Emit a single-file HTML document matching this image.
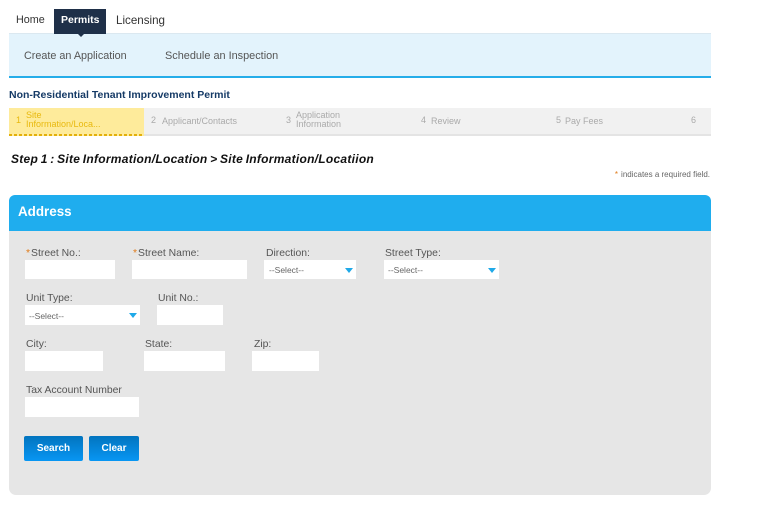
<!DOCTYPE html>
<html><head><meta charset="utf-8"><style>
html,body{margin:0;padding:0;background:#fff}
body{width:775px;height:525px;position:relative;overflow:hidden;font-family:"Liberation Sans",sans-serif}
.a{position:absolute;white-space:nowrap}
.l{font-size:10.4px;color:#555;line-height:12px}
.i{position:absolute;background:#fff}
.st{color:#e07b1a;margin-right:1px}
.g{color:#aaa;font-size:9px;line-height:10px}
.sel{font-size:8.5px;color:#666;line-height:10px}
.tri{position:absolute;width:0;height:0;border-left:4px solid transparent;border-right:4px solid transparent;border-top:5px solid #1fa9e8}
</style></head><body>
<div class="a" style="left:9px;top:33px;width:702px;height:42px;background:#e3f3fc;border-top:1px solid #dbe8f0"></div>
<div class="a" style="left:9px;top:76px;width:702px;height:2px;background:#25ade9"></div>
<div class="a" style="left:16px;top:14px;font-size:10.8px;line-height:13px;color:#333">Home</div>
<div class="a" style="left:54px;top:9px;width:52px;height:25px;background:#1f3049"></div>
<div class="a" style="left:77px;top:33px;width:0;height:0;border-left:4px solid transparent;border-right:4px solid transparent;border-top:4px solid #1f3049"></div>
<div class="a" style="left:61px;top:14px;font-size:10.5px;line-height:13px;color:#fff;font-weight:bold">Permits</div>
<div class="a" style="left:116px;top:14px;font-size:11.6px;line-height:13px;color:#333">Licensing</div>
<div class="a" style="left:24px;top:50px;font-size:10.8px;line-height:13px;color:#555">Create an Application</div>
<div class="a" style="left:165px;top:50px;font-size:10.9px;line-height:13px;color:#555">Schedule an Inspection</div>
<div class="a" style="left:9px;top:89px;font-size:10.5px;line-height:13px;color:#153a66;font-weight:bold">Non-Residential Tenant Improvement Permit</div>

<div class="a" style="left:9px;top:108px;width:702px;height:26px;background:#f1f1f1"></div>
<div class="a" style="left:9px;top:134px;width:702px;height:2px;background:#e4e4e4"></div>
<div class="a" style="left:9px;top:108px;width:135px;height:26px;background:#feeb9b"></div>
<div class="a" style="left:9px;top:134px;width:135px;height:2px;background:repeating-linear-gradient(90deg,#e3b00c 0 3px,#feeb9b 3px 5px)"></div>
<div class="a" style="left:16px;top:115px;color:#e8b90f;font-size:9px;line-height:10px">1</div>
<div class="a" style="left:26px;top:111px;color:#e8b90f;font-size:9px;line-height:9px">Site<br>Information/Loca...</div>
<div class="a g" style="left:151px;top:115px">2</div>
<div class="a g" style="left:162px;top:116px">Applicant/Contacts</div>
<div class="a g" style="left:286px;top:115px">3</div>
<div class="a g" style="left:296px;top:111px;line-height:9px">Application<br>Information</div>
<div class="a g" style="left:421px;top:115px">4</div>
<div class="a g" style="left:431px;top:116px">Review</div>
<div class="a g" style="left:556px;top:115px">5</div>
<div class="a g" style="left:565px;top:116px">Pay Fees</div>
<div class="a g" style="left:691px;top:115px">6</div>

<div class="a" style="left:11px;top:152px;font-size:12px;line-height:14px;color:#111;font-style:italic;font-weight:bold;letter-spacing:.27px;word-spacing:-1px">Step 1 : Site Information/Location &gt; Site Information/Locatiion</div>
<div class="a" style="right:65px;top:170px;font-size:8px;line-height:10px;color:#666"><span class="st" style="margin-right:3px">*</span>indicates a required field.</div>

<div class="a" style="left:9px;top:195px;width:702px;height:36px;background:#1fadee;border-radius:6px 6px 0 0"></div>
<div class="a" style="left:9px;top:231px;width:702px;height:264px;background:#e6e6e6;border-radius:0 0 7px 7px"></div>
<div class="a" style="left:18px;top:204px;font-size:13.4px;line-height:16px;color:#fff;font-weight:bold">Address</div>

<div class="a l" style="left:26px;top:248px"><span class="st">*</span>Street No.:</div>
<div class="i" style="left:25px;top:260px;width:90px;height:19px"></div>
<div class="a l" style="left:133px;top:248px"><span class="st">*</span>Street Name:</div>
<div class="i" style="left:132px;top:260px;width:115px;height:19px"></div>
<div class="a l" style="left:266px;top:248px">Direction:</div>
<div class="i" style="left:264px;top:260px;width:92px;height:19px"></div>
<div class="a sel" style="left:269px;top:265px">--Select--</div>
<div class="tri" style="left:345px;top:268px"></div>
<div class="a l" style="left:385px;top:248px">Street Type:</div>
<div class="i" style="left:384px;top:260px;width:115px;height:19px"></div>
<div class="a sel" style="left:388px;top:265px">--Select--</div>
<div class="tri" style="left:488px;top:268px"></div>

<div class="a l" style="left:26px;top:293px">Unit Type:</div>
<div class="i" style="left:25px;top:305px;width:115px;height:20px"></div>
<div class="a sel" style="left:29px;top:311px">--Select--</div>
<div class="tri" style="left:129px;top:313px"></div>
<div class="a l" style="left:158px;top:293px">Unit No.:</div>
<div class="i" style="left:157px;top:305px;width:66px;height:20px"></div>

<div class="a l" style="left:26px;top:339px">City:</div>
<div class="i" style="left:25px;top:351px;width:78px;height:20px"></div>
<div class="a l" style="left:145px;top:339px">State:</div>
<div class="i" style="left:144px;top:351px;width:81px;height:20px"></div>
<div class="a l" style="left:254px;top:339px">Zip:</div>
<div class="i" style="left:252px;top:351px;width:67px;height:20px"></div>

<div class="a l" style="left:26px;top:385px">Tax Account Number</div>
<div class="i" style="left:25px;top:397px;width:114px;height:20px"></div>

<div class="a" style="left:24px;top:436px;width:59px;height:25px;border-radius:2px;background:linear-gradient(#0274bf,#0896f3);color:#fff;font-size:10px;font-weight:bold;line-height:25px;text-align:center">Search</div>
<div class="a" style="left:89px;top:436px;width:50px;height:25px;border-radius:2px;background:linear-gradient(#0274bf,#0896f3);color:#fff;font-size:10px;font-weight:bold;line-height:25px;text-align:center">Clear</div>
</body></html>
